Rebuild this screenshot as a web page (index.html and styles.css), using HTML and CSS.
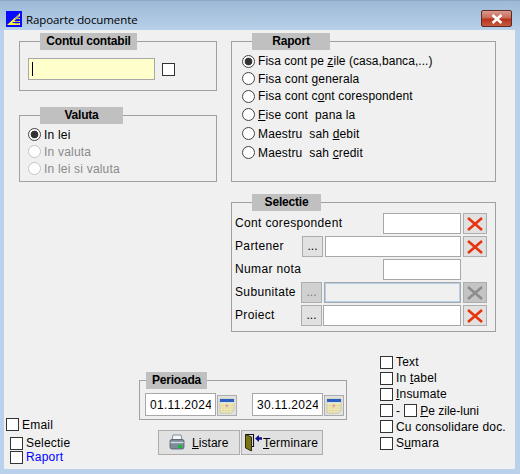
FILE: index.html
```html
<!DOCTYPE html>
<html lang="ro">
<head>
<meta charset="utf-8">
<title>Rapoarte documente</title>
<link rel="stylesheet" href="styles.css">
</head>
<body>
<svg class="defs" width="0" height="0" aria-hidden="true">
  <defs>
    <symbol id="x" viewBox="0 0 16 14">
      <path d="M1 1 L15 13 M15 1 L1 13" stroke="currentColor" stroke-width="2.600" fill="none"/>
    </symbol>
    <symbol id="cal" viewBox="0 0 16 16">
      <path d="M1 1 H15 V12 L12 15 H1 Z" fill="#f6efb8" stroke="#b8b184" stroke-width=".6"/>
      <rect x="1" y="1" width="14" height="3" fill="#2a5fc0"/>
      <rect x="1" y="4" width="14" height="1" fill="#d6e2f2"/>
      <path d="M1 7.500 H15 M1 10 H15 M1 12.500 H13 M4 5 V15 M7 5 V15 M10 5 V15 M13 5 V13" stroke="#d4cd9a" stroke-width=".6"/>
      <rect x="6.500" y="6.500" width="2.500" height="2.500" fill="#e4a0a8"/>
    </symbol>
  </defs>
</svg>
<div class="window">
  <header class="titlebar">
    <svg class="logo" width="16" height="16" viewBox="0 0 16 16" aria-hidden="true">
      <rect width="16" height="16" fill="#0a0aff"/>
      <path d="M1 14 L14 2 V5 L6 12 H14 V14 Z" fill="#fff23a"/>
      <path d="M8 7.500 H14 M5 10.500 H14" stroke="#fff23a" stroke-width="1.200"/>
      <path d="M10 4 V13 M12 3 V13" stroke="#0a0aff" stroke-width=".6"/>
    </svg>
    <span class="title">Rapoarte documente</span>
    <button class="close" aria-label="Inchide">
      <svg width="14" height="10" viewBox="0 0 14 10" aria-hidden="true">
        <path d="M2.500 1 L11.500 9 M11.500 1 L2.500 9" stroke="#fff" stroke-width="2.600" fill="none"/>
      </svg>
    </button>
  </header>

  <main class="client">
    <div class="top">
      <div class="col-left">
        <fieldset class="group g-cont">
          <legend class="lg-cont">Contul contabil</legend>
          <div class="cont-row">
            <div class="field-yellow"><span class="caret"></span></div>
            <input type="checkbox" class="cb">
          </div>
        </fieldset>
        <fieldset class="group g-valuta">
          <legend class="lg-valuta">Valuta</legend>
          <div class="val-list">
            <label class="opt val-opt"><input type="radio" name="val" class="rd" checked><span>In lei</span></label>
            <label class="opt val-opt off"><input type="radio" name="val" class="rd" disabled><span>In valuta</span></label>
            <label class="opt val-opt off"><input type="radio" name="val" class="rd" disabled><span>In lei si valuta</span></label>
          </div>
        </fieldset>
      </div>
      <div class="col-right">
        <fieldset class="group g-raport">
          <legend class="lg-raport">Raport</legend>
          <div class="rap-list">
            <label class="opt r1 first"><input type="radio" name="rap" class="rd" checked><span>Fisa cont pe <u>z</u>ile (casa,banca,...)</span></label>
            <label class="opt r2"><input type="radio" name="rap" class="rd"><span>Fisa cont <u>g</u>enerala</span></label>
            <label class="opt r1"><input type="radio" name="rap" class="rd"><span>Fisa cont c<u>o</u>nt corespondent</span></label>
            <label class="opt r3"><input type="radio" name="rap" class="rd"><span><u>F</u>ise cont&nbsp; pana la</span></label>
            <label class="opt r3"><input type="radio" name="rap" class="rd"><span>Maestru&nbsp; sah <u>d</u>ebit</span></label>
            <label class="opt r3"><input type="radio" name="rap" class="rd"><span>Maestru&nbsp; sah <u>c</u>redit</span></label>
          </div>
        </fieldset>
        <fieldset class="group g-sel">
          <legend class="lg-sel">Selectie</legend>
          <div class="sel-list">
            <div class="sel-row">
              <span class="sel-label">Cont corespondent</span>
              <input class="txt w78" type="text">
              <button class="xbtn" aria-label="Sterge"><svg width="16" height="14"><use href="#x"/></svg></button>
            </div>
            <div class="sel-row">
              <span class="sel-label">Partener</span>
              <button class="dots">...</button>
              <input class="txt w136" type="text">
              <button class="xbtn" aria-label="Sterge"><svg width="16" height="14"><use href="#x"/></svg></button>
            </div>
            <div class="sel-row">
              <span class="sel-label">Numar nota</span>
              <input class="txt w78" type="text">
              <span class="xslot"></span>
            </div>
            <div class="sel-row">
              <span class="sel-label">Subunitate</span>
              <button class="dots dis" disabled>...</button>
              <input class="txt w137 txt-dis" type="text" disabled>
              <button class="xbtn xdis" disabled aria-label="Sterge"><svg width="16" height="14"><use href="#x"/></svg></button>
            </div>
            <div class="sel-row">
              <span class="sel-label">Proiect</span>
              <button class="dots tight">...</button>
              <input class="txt w138" type="text">
              <button class="xbtn" aria-label="Sterge"><svg width="16" height="14"><use href="#x"/></svg></button>
            </div>
          </div>
        </fieldset>
      </div>
    </div>

    <div class="bottom">
      <div class="left-checks">
        <label class="opt chk"><input type="checkbox" class="cb"><span>Email</span></label>
        <div class="sub-checks">
          <label class="opt chk"><input type="checkbox" class="cb"><span>Selectie</span></label>
          <label class="opt chk link"><input type="checkbox" class="cb"><span>Raport</span></label>
        </div>
      </div>
      <div class="center">
        <fieldset class="group g-per">
          <legend class="lg-per">Perioada</legend>
          <div class="per-row">
            <input class="date" type="text" value="01.11.2024">
            <button class="calbtn" aria-label="Calendar"><svg width="16" height="16"><use href="#cal"/></svg></button>
            <input class="date date2" type="text" value="30.11.2024">
            <button class="calbtn" aria-label="Calendar"><svg width="16" height="16"><use href="#cal"/></svg></button>
          </div>
        </fieldset>
        <div class="actions">
          <button class="act act-list">
            <svg width="18" height="17" viewBox="0 0 18 17" aria-hidden="true">
              <path d="M5 1 H13 L14 6 H4 Z" fill="#f4f6f8" stroke="#6a7581" stroke-width=".8"/>
              <path d="M2 7 Q2 5.500 4 5.500 H14 Q16 5.500 16 7 V13 Q16 15 14 15 H4 Q2 15 2 13 Z" fill="#7d8b99" stroke="#4f5c68" stroke-width=".8"/>
              <path d="M2.500 8.500 H15.500" stroke="#d2dae2" stroke-width="1.400"/>
              <rect x="10" y="11" width="4" height="3" fill="#18b840"/>
            </svg>
            <span><u>L</u>istare</span>
          </button>
          <button class="act act-term">
            <svg width="19" height="19" viewBox="0 0 19 19" aria-hidden="true">
              <path d="M1.500 1.500 H9.500 V13.500 H8" fill="none" stroke="#111" stroke-width="1.100"/>
              <path d="M1.500 1.500 L7.500 4 V18 L1.500 15 Z" fill="#7a7512" stroke="#20200a" stroke-width=".9"/>
              <path d="M11 5.500 L15 2 V4.200 H18 V6.800 H15 V9 Z" fill="#10108c"/>
            </svg>
            <span><u>T</u>erminare</span>
          </button>
        </div>
      </div>
      <div class="right-checks">
        <label class="opt chk"><input type="checkbox" class="cb"><span>Text</span></label>
        <label class="opt chk"><input type="checkbox" class="cb"><span>In <u>t</u>abel</span></label>
        <label class="opt chk"><input type="checkbox" class="cb"><span><u>I</u>nsumate</span></label>
        <div class="opt chk">
          <input type="checkbox" class="cb">
          <span class="dash">-</span>
          <input type="checkbox" class="cb">
          <span class="zile"><u>P</u>e zile-luni</span>
        </div>
        <label class="opt chk"><input type="checkbox" class="cb"><span>Cu consolidare doc.</span></label>
        <label class="opt chk"><input type="checkbox" class="cb"><span>S<u>u</u>mara</span></label>
      </div>
    </div>
  </main>
</div>
</body>
</html>
```
FILE: styles.css
```css
* { box-sizing: border-box; }
html, body { margin: 0; padding: 0; height: 100%; overflow: hidden; }
body {
  font-family: "Liberation Sans", Arial, sans-serif;
  font-size: 12px;
  letter-spacing: .2px;
  color: #000;
  background: #b9d1ea;
}
.defs { position: absolute; }
.window {
  width: 520px;
  height: 474px;
  display: flex;
  flex-direction: column;
  background: linear-gradient(#9db9d6 0, #b9d1ea 30px);
  border-top: 1px solid #8fa8c4;
}
.titlebar {
  height: 29px;
  flex: none;
  display: flex;
  align-items: center;
  padding: 0 8px 0 6px;
}
.logo { margin-top: 7px; }
.title {
  margin-left: 4px;
  margin-top: 7px;
  font-family: "Open Sans", "Noto Sans", sans-serif;
  font-size: 11.500px;
  letter-spacing: -.1px;
  color: #000;
}
.close {
  margin-left: auto;
  margin-top: 6px;
  width: 31px;
  height: 17px;
  padding: 0;
  display: flex;
  align-items: center;
  justify-content: center;
  border: 1px solid #5e2a24;
  border-radius: 2px;
  background: linear-gradient(#dc9a8e 0, #c96a58 45%, #b8321e 55%, #c65a40 100%);
}
.client {
  flex: 1;
  margin: 0 5px 5px 4px;
  padding: 3px 0 0 0;
  background: #f0f0f0;
  display: flex;
  flex-direction: column;
}
.top {
  display: flex;
  gap: 14px;
  padding-left: 15px;
}
.col-left, .col-right { display: flex; flex-direction: column; }
.col-left { width: 198px; }
.col-right { width: 265px; }

/* group boxes */
.group {
  margin: 0;
  padding: 0;
  min-width: 0;
  border: 1px solid #a0a0a0;
}
.group legend {
  display: flex;
  justify-content: center;
  padding: 0;
  height: 17px;
  line-height: 16px;
  background: #c0c0c0;
  font-weight: bold;
  font-size: 12px;
  letter-spacing: -.2px;
}
.g-cont { height: 58px; }
.g-valuta { height: 75px; margin-top: 16px; }
.g-raport { height: 149px; }
.g-sel { height: 138px; margin-top: 12px; }
.lg-cont { margin-left: 20px; width: 97px; }
.lg-valuta { margin-left: 20px; width: 83px; }
.lg-raport { margin-left: 20px; width: 78px; }
.lg-sel { margin-left: 20px; width: 69px; }
.lg-per { margin-left: 6px; width: 61px; }

/* controls */
.rd, .cb {
  appearance: none;
  -webkit-appearance: none;
  margin: 0;
  width: 13px;
  height: 13px;
  flex: none;
  background: #fff;
}
.cb { border: 1px solid #333; }
.rd { border: 1px solid #444; border-radius: 50%; }
.rd:checked { background: radial-gradient(circle, #333 0, #333 3.500px, #fff 4.200px); }
.rd:disabled { border-color: #c4c4c4; }
.opt {
  display: flex;
  align-items: center;
  white-space: nowrap;
}
.off { color: #8a8a8a; }

.cont-row {
  display: flex;
  align-items: center;
  margin: 8px 0 0 8px;
  gap: 7px;
}
.field-yellow {
  width: 127px;
  height: 22px;
  background: #ffffcc;
  border: 1px solid #a8a8a8;
  display: flex;
  align-items: center;
  padding-left: 3px;
}
.caret { width: 1px; height: 14px; background: #000; }

.val-list { padding: 2px 0 0 8px; }
.val-opt { height: 17px; gap: 3px; }

.rap-list { padding: 2px 0 0 10px; letter-spacing: .15px; }
.rap-list .opt { gap: 3px; }
.r1 { height: 18px; }
.r2 { height: 17px; }
.r3 { height: 19px; }
.first { letter-spacing: .05px; }

/* selection rows */
.sel-list {
  padding: 2px 8px 0 3px;
  display: flex;
  flex-direction: column;
  gap: 2px;
}
.sel-row { display: flex; align-items: center; height: 21px; gap: 2px; }
.sel-label { flex: 1; white-space: nowrap; padding-bottom: 1px; letter-spacing: .35px; }
.txt {
  height: 21px;
  margin: 0;
  padding: 0 2px;
  background: #fff;
  border: 1px solid #a8a8a8;
  border-radius: 0;
  outline: none;
}
.w78 { width: 78px; }
.w136 { width: 136px; }
.w137 { width: 137px; }
.w138 { width: 138px; }
.txt-dis { background: #f0f0f0; box-shadow: inset 0 0 0 1px #b4cfe9; }
.xslot { width: 24px; flex: none; }
.xbtn {
  width: 24px;
  height: 21px;
  flex: none;
  padding: 0;
  display: flex;
  align-items: center;
  justify-content: center;
  background: #e1e1e1;
  border: 1px solid #adadad;
  color: #e8340c;
}
.xdis { background: #c4c4c4; color: #8d8d8d; }
.dots {
  width: 21px;
  height: 21px;
  flex: none;
  padding: 0 0 2px;
  font: 12px "Liberation Sans", Arial, sans-serif;
  color: #000;
  background: #e1e1e1;
  border: 1px solid #adadad;
}
.dis { background: #d0d0d0; color: #777; }
.tight { margin-right: -1px; }

/* bottom area */
.bottom {
  display: grid;
  grid-template-columns: 133px 241px auto;
  margin-top: 18px;
  padding-left: 2px;
  flex: 1;
}
.left-checks {
  align-self: end;
  padding-bottom: 5px;
  display: flex;
  flex-direction: column;
}
.left-checks > .chk { height: 15px; margin-bottom: 3px; }
.sub-checks { padding: 1px 0 0 4px; }
.sub-checks .chk { height: 14px; }
.chk { gap: 3px; }
.link { color: #0000ff; }

.center { padding-top: 22px; }
.g-per { width: 208px; height: 48px; }
.per-row {
  display: flex;
  align-items: flex-end;
  padding: 4px 0 0 5px;
}
.date {
  width: 71px;
  height: 23px;
  margin: 0;
  padding: 0 4px;
  font: 12px "Liberation Sans", Arial, sans-serif;
  letter-spacing: .3px;
  background: #fff;
  border: 1px solid #a8a8a8;
  border-radius: 0;
  outline: none;
}
.date2 { margin-left: 15px; }
.calbtn {
  width: 20px;
  height: 21px;
  margin-left: 1px;
  padding: 0;
  display: flex;
  align-items: center;
  justify-content: center;
  background: #e1e1e1;
  border: 1px solid #adadad;
}
.actions {
  display: flex;
  gap: 1px;
  margin: 10px 0 0 19px;
}
.act {
  width: 82px;
  height: 25px;
  padding: 0;
  display: flex;
  align-items: center;
  font: 12px "Liberation Sans", Arial, sans-serif;
  letter-spacing: .3px;
  color: #000;
  background: #e1e1e1;
  border: 1px solid #adadad;
}
.act-list { padding-left: 9px; gap: 6px; letter-spacing: .05px; }
.act-term { padding-left: 2px; gap: 0; letter-spacing: .2px; }

.right-checks { padding-top: 4px; }
.right-checks .chk { height: 16.200px; }
.dash { margin-right: 1px; }
.zile { letter-spacing: 0; }
```
